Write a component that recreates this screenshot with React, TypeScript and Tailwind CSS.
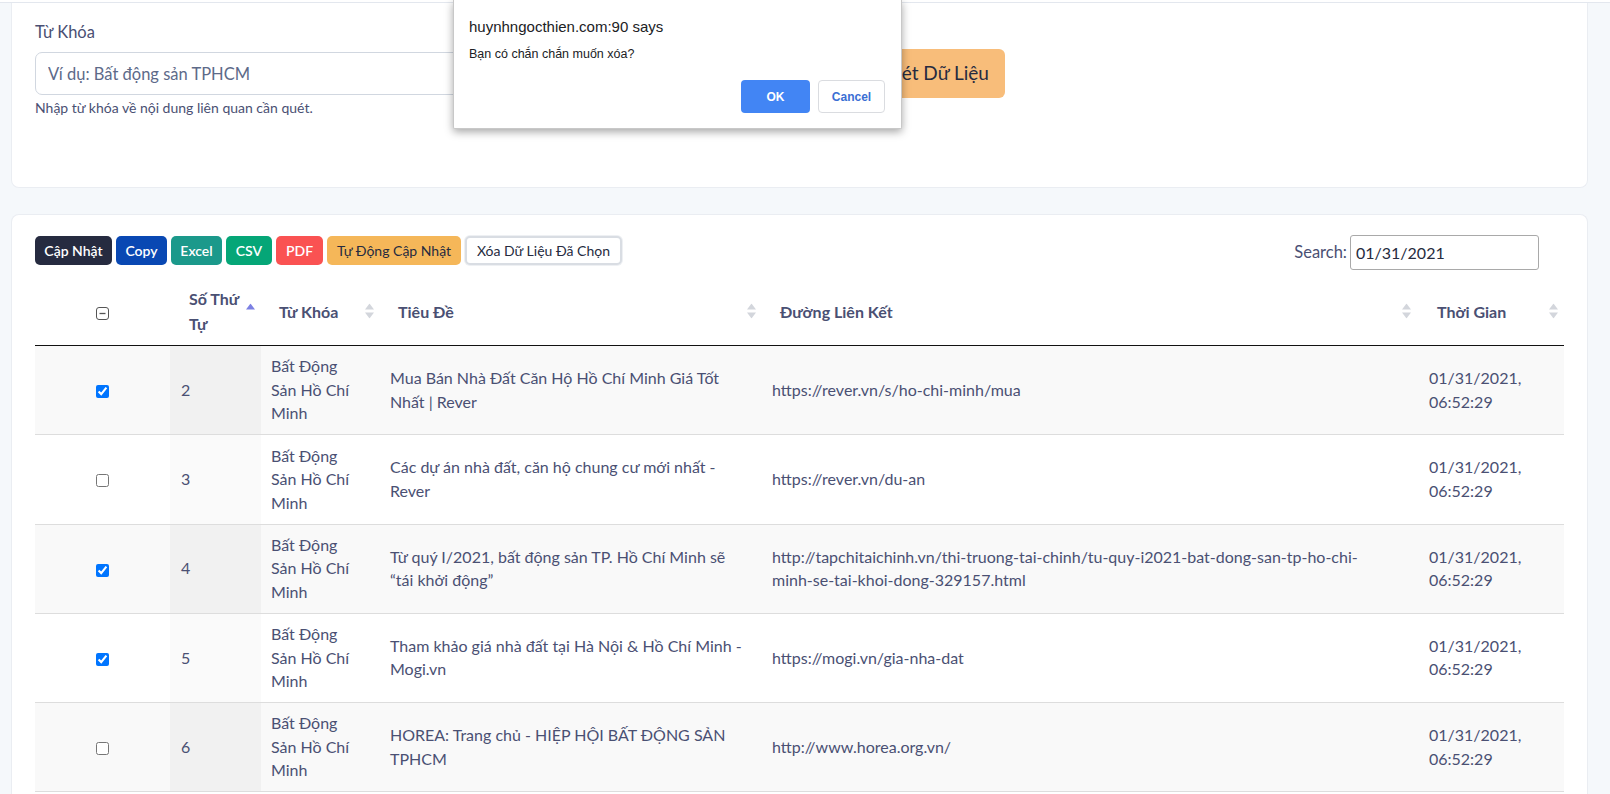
import React from "react";

const rows = [
  { checked: true, n: 2, title: ["Mua Bán Nhà Đất Căn Hộ Hồ Chí Minh Giá Tốt", "Nhất | Rever"], link: ["https://rever.vn/s/ho-chi-minh/mua"] },
  { checked: false, n: 3, title: ["Các dự án nhà đất, căn hộ chung cư mới nhất -", "Rever"], link: ["https://rever.vn/du-an"] },
  { checked: true, n: 4, title: ["Từ quý I/2021, bất động sản TP. Hồ Chí Minh sẽ", "“tái khởi động”"], link: ["http://tapchitaichinh.vn/thi-truong-tai-chinh/tu-quy-i2021-bat-dong-san-tp-ho-chi-", "minh-se-tai-khoi-dong-329157.html"] },
  { checked: true, n: 5, title: ["Tham khảo giá nhà đất tại Hà Nội & Hồ Chí Minh -", "Mogi.vn"], link: ["https://mogi.vn/gia-nha-dat"] },
  { checked: false, n: 6, title: ["HOREA: Trang chủ - HIỆP HỘI BẤT ĐỘNG SẢN", "TPHCM"], link: ["http://www.horea.org.vn/"] },
];

function SortIcon({ active }: { active?: boolean }) {
  return (
    <svg width="9" height="15" viewBox="0 0 9 15" className="absolute right-[6px] top-1/2 -translate-y-1/2">
      <polygon points="4.5,0 9,6 0,6" fill={active ? "#7c80e3" : "#d3d6dc"} />
      {!active && <polygon points="0,9 9,9 4.5,15" fill="#d3d6dc" />}
    </svg>
  );
}

function Lines({ items }: { items: string[] }) {
  return (
    <>
      {items.map((t, i) => (
        <div key={i} className="whitespace-nowrap">{t}</div>
      ))}
    </>
  );
}

export default function App() {
  return (
    <div className="relative h-[794px] w-[1610px] overflow-hidden bg-[#f5f8fb] font-['Lato','Noto_Sans',sans-serif] text-[#4a5073]">
      <div className="h-[3px] border-b border-[#e3e7ee] bg-white" />

      <div className="pl-[11px] pr-[22px]">
        {/* Card 1 */}
        <div className="h-[185px] rounded-b-[8px] border border-t-0 border-[#eaedf2] bg-white pl-[23px] pt-[17px]">
          <div className="flex items-start">
            <div className="w-[805px]">
              <div className="text-[16.5px] leading-[24px] text-[#4a5073]">Từ Khóa</div>
              <input
                className="mt-[8px] block h-[43px] w-full rounded-[7px] border border-[#d1d7e0] bg-white px-[12px] text-[16.5px] text-[#4a5073] outline-none placeholder:text-[#5d6a89]"
                placeholder="Ví dụ: Bất động sản TPHCM"
                readOnly
              />
              <div className="mt-[4px] text-[14px] leading-[18px] text-[#4a5073]">Nhập từ khóa về nội dung liên quan cần quét.</div>
            </div>
            <button className="ml-[20px] mt-[29px] h-[49px] w-[145px] whitespace-nowrap rounded-[6px] bg-[#f8bd7a] text-center text-[19px] text-[#262b40]">
              Quét Dữ Liệu
            </button>
          </div>
        </div>

        {/* Card 2 */}
        <div className="mt-[26px] h-[620px] rounded-t-[8px] border border-b-0 border-[#eaedf2] bg-white pl-[23px] pr-[23px] pt-[20px]">
          <div className="flex items-start justify-between">
            <div className="mt-[1px] flex gap-[4px] text-[14px]">
              <button className="h-[29px] w-[77px] rounded-[5px] bg-[#262b40] font-semibold text-white">Cập Nhật</button>
              <button className="h-[29px] w-[51px] rounded-[5px] bg-[#0948b3] font-semibold text-white">Copy</button>
              <button className="h-[29px] w-[51px] rounded-[5px] bg-[#1b998b] font-semibold text-white">Excel</button>
              <button className="h-[29px] w-[46px] rounded-[5px] bg-[#05a677] font-semibold text-white">CSV</button>
              <button className="h-[29px] w-[47px] rounded-[5px] bg-[#fa5252] font-semibold text-white">PDF</button>
              <button className="h-[29px] w-[134px] rounded-[5px] bg-[#f5b759] text-[#262b40]">Tự Động Cập Nhật</button>
              <button className="h-[29px] w-[157px] rounded-[5px] border-2 border-[#d9dde3] bg-white text-[#262b40] shadow-[0_0_0_1px_#eef0f3]">Xóa Dữ Liệu Đã Chọn</button>
            </div>
            <div className="mr-[25px] flex items-center gap-[3px]">
              <span className="text-[16.5px] text-[#4a5073]">Search:</span>
              <input
                className="h-[35px] w-[189px] rounded-[3px] border border-[#a9a9a9] px-[5px] text-[16px] text-[#262b40] outline-none"
                value="01/31/2021"
                readOnly
              />
            </div>
          </div>

          <table className="mt-[7px] w-[1529px] table-fixed border-collapse text-[16px]">
            <colgroup>
              <col className="w-[135px]" />
              <col className="w-[91px]" />
              <col className="w-[119px]" />
              <col className="w-[382px]" />
              <col className="w-[655px]" />
              <col className="w-[147px]" />
            </colgroup>
            <thead>
              <tr className="border-b border-[#111111] text-left font-bold text-[#4a5073]">
                <th className="relative pb-[9px] pt-[9px] text-center leading-[25px]">
                  <svg width="13" height="13" viewBox="0 0 13 13" className="inline-block align-middle">
                    <rect x="0.5" y="0.5" width="12" height="12" rx="2.5" fill="white" stroke="#555" strokeWidth="1" />
                    <line x1="3.5" y1="6.5" x2="9.5" y2="6.5" stroke="#555" strokeWidth="1.3" />
                  </svg>
                </th>
                <th className="relative pb-[9px] pl-[19px] pr-[18px] pt-[9px] leading-[25px]">
                  Số Thứ<br />Tự
                  <SortIcon active />
                </th>
                <th className="relative pb-[9px] pl-[18px] pr-[18px] pt-[9px] leading-[25px]">
                  Từ Khóa
                  <SortIcon />
                </th>
                <th className="relative pb-[9px] pl-[18px] pr-[18px] pt-[9px] leading-[25px]">
                  Tiêu Đề
                  <SortIcon />
                </th>
                <th className="relative pb-[9px] pl-[18px] pr-[18px] pt-[9px] leading-[25px]">
                  Đường Liên Kết
                  <SortIcon />
                </th>
                <th className="relative pb-[9px] pl-[20px] pr-[18px] pt-[9px] leading-[25px]">
                  Thời Gian
                  <SortIcon />
                </th>
              </tr>
            </thead>
            <tbody>
              {rows.map((r, i) => {
                const odd = i % 2 === 0;
                return (
                  <tr key={r.n} className={`border-b border-[#dddddd] ${odd ? "bg-[#f9f9f9]" : "bg-white"} leading-[23.5px] text-[#4a5073]`}>
                    <td className="pb-[9.5px] pt-[8.25px] text-center align-middle">
                      <input type="checkbox" checked={r.checked} readOnly className="m-0 inline-block h-[13px] w-[13px] align-middle" />
                    </td>
                    <td className={`pb-[9.5px] pl-[11px] pt-[8.25px] align-middle ${odd ? "bg-[#f1f1f1]" : "bg-[#fafafa]"}`}>{r.n}</td>
                    <td className="pb-[9.5px] pl-[10px] pt-[8.25px] align-middle">
                      <Lines items={["Bất Động", "Sản Hồ Chí", "Minh"]} />
                    </td>
                    <td className="pb-[9.5px] pl-[10px] pt-[8.25px] align-middle">
                      <Lines items={r.title} />
                    </td>
                    <td className="pb-[9.5px] pl-[10px] pt-[8.25px] align-middle">
                      <Lines items={r.link} />
                    </td>
                    <td className="pb-[9.5px] pl-[12px] pt-[8.25px] align-middle">
                      <Lines items={["01/31/2021,", "06:52:29"]} />
                    </td>
                  </tr>
                );
              })}
            </tbody>
          </table>
        </div>
      </div>

      {/* Browser confirm dialog */}
      <div className="absolute left-[453px] top-0 h-[129px] w-[449px] rounded-b-[2px] border border-t-0 border-[#c8c8c8] bg-white font-['Liberation_Sans','Noto_Sans',sans-serif] text-[#202124] shadow-[0_3px_8px_rgba(0,0,0,0.35)]">
        <div className="pl-[15px] pt-[17px] text-[15px] leading-[20px]">huynhngocthien.com:90 says</div>
        <div className="pl-[15px] pt-[9px] text-[12.5px] leading-[16px]">Bạn có chắn chắn muốn xóa?</div>
        <div className="absolute right-[16px] top-[80px] flex gap-[8px]">
          <button className="h-[33px] w-[69px] rounded-[4px] bg-[#4285f4] text-[12px] font-bold text-white">OK</button>
          <button className="h-[33px] w-[67px] rounded-[4px] border border-[#dadce0] bg-white text-[12px] font-bold text-[#3b6fd4]">Cancel</button>
        </div>
      </div>
    </div>
  );
}
